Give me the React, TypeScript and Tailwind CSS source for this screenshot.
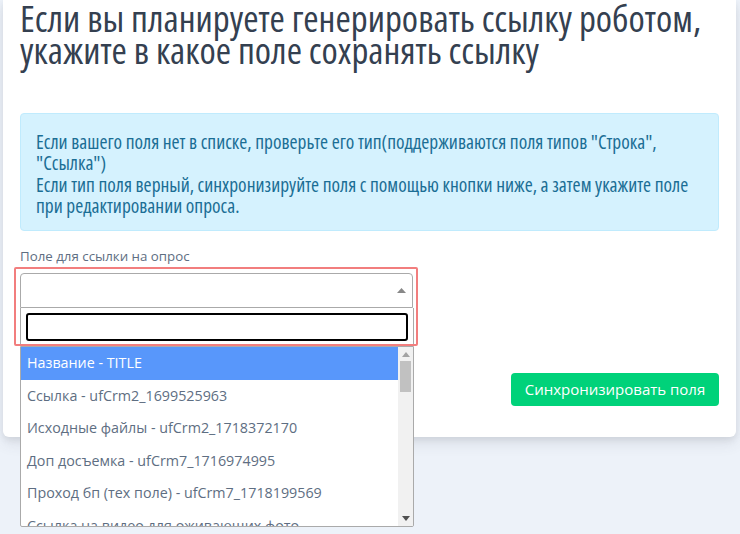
import React from "react";

const items = [
  "Название - TITLE",
  "Ссылка - ufCrm2_1699525963",
  "Исходные файлы - ufCrm2_1718372170",
  "Доп досъемка - ufCrm7_1716974995",
  "Проход бп (тех поле) - ufCrm7_1718199569",
  "Ссылка на видео для оживающих фото - ufCrm7_1718199570",
];

export default function App() {
  return (
    <div className="min-h-[534px] w-[740px] bg-[#edf2f9] pl-[3px] pr-[4px] [font-family:'Open_Sans',sans-serif] overflow-hidden">
      <div className="bg-white rounded-b-[6px] shadow-[0_7px_14px_0_rgba(65,69,88,0.1),0_3px_6px_0_rgba(0,0,0,0.07)] px-[17px] pt-[2px] pb-[31px]">
        <h1 className="text-[37px] leading-[32px] text-[#344050] [font-stretch:87.5%] font-normal pr-[8px]">
          Если вы планируете генерировать ссылку роботом, укажите в какое поле сохранять ссылку
        </h1>
        <div className="mt-[47px] rounded-[4px] border border-[#c0ebfd] bg-[#d5f2fe] text-[#1b6e95] text-[19.4px] leading-[21.3px] pl-[15px] pr-[15px] pt-[17px] pb-[14px] [font-stretch:87.5%]">
          <div>Если вашего поля нет в списке, проверьте его тип(поддерживаются поля типов "Строка", "Ссылка")</div>
          <div>Если тип поля верный, синхронизируйте поля с помощью кнопки ниже, а затем укажите поле при редактировании опроса.</div>
        </div>
        <div className="mt-[16px] text-[13.3px] leading-[18px] text-[#5e6e82]">Поле для ссылки на опрос</div>
        <div className="relative mt-[8px] w-[393px]">
          <div className="h-[35px] border border-[#aaaaaa] rounded-t-[4px] bg-white flex items-center justify-end pr-[6px]">
            <svg width="9" height="5" viewBox="0 0 9 5"><path d="M0 5 L4.5 0 L9 5 Z" fill="#888" /></svg>
          </div>
          <div className="absolute left-0 top-full w-[394px] z-10">
            <div className="bg-white border-x border-[#aaaaaa] px-[5px] pt-[5px] pb-[5px]">
              <div className="h-[28px] border-2 border-black rounded-[3px] bg-white" />
            </div>
            <div className="flex border border-[#aaaaaa] bg-white h-[181px] overflow-hidden rounded-b-[2px]">
              <div className="flex-1 text-[14.3px] text-[#5e6e82]">
                {items.map((t, i) => (
                  <div
                    key={i}
                    className={
                      "pt-[6px] pb-[6px] leading-[20.5px] pl-[6px] pr-[6px] " +
                      (i === 0 ? "bg-[#5897fb] text-white" : "")
                    }
                  >
                    {t}
                  </div>
                ))}
              </div>
              <div className="w-[15px] bg-[#f1f1f1] flex flex-col items-center">
                <svg className="mt-[5px]" width="8" height="5" viewBox="0 0 8 5"><path d="M0 5 L4 0 L8 5 Z" fill="#a3a3a3" /></svg>
                <div className="mt-[4px] w-[11px] h-[31px] bg-[#c1c1c1]" />
                <div className="flex-1" />
                <svg className="mb-[5px]" width="8" height="5" viewBox="0 0 8 5"><path d="M0 0 L8 0 L4 5 Z" fill="#505050" /></svg>
              </div>
            </div>
          </div>
          <div className="absolute -left-[6px] -top-[6px] w-[404px] h-[79px] border-2 border-[#f27e7e] rounded-[2px] pointer-events-none z-20" />
        </div>
        <div className="mt-[65px] flex justify-end">
          <button className="h-[33px] w-[208px] rounded-[4px] bg-[#00d27a] text-white text-[15px] flex items-center justify-center">
            Синхронизировать поля
          </button>
        </div>
      </div>
    </div>
  );
}
